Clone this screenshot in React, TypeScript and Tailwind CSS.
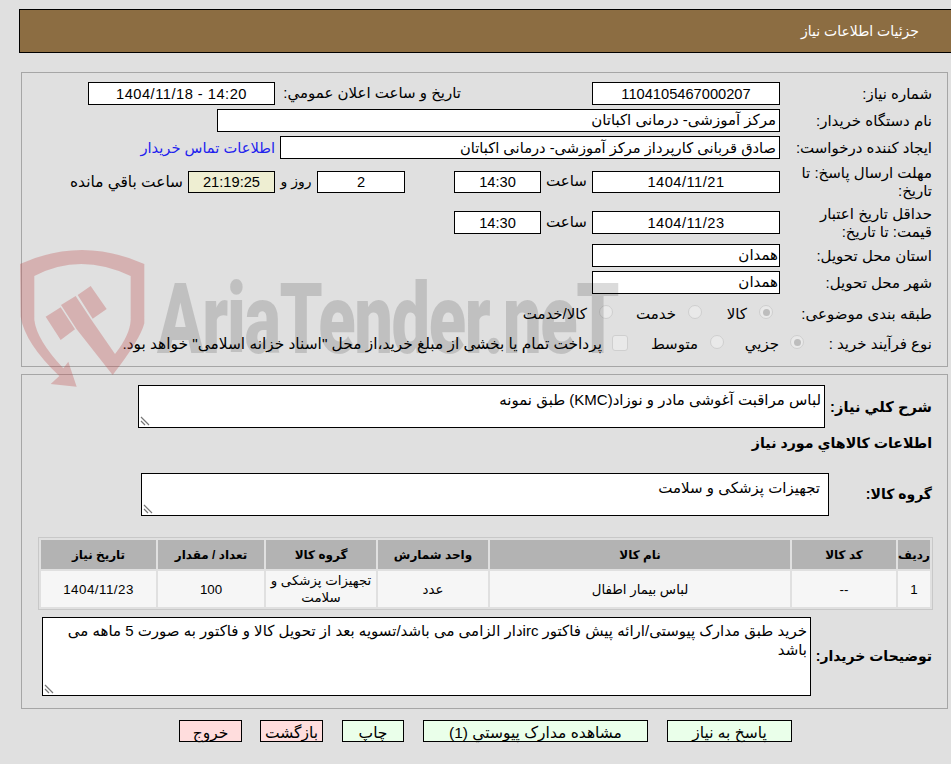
const field = 'h-[23px] border border-black flex items-center shrink-0';
const digits = 'text-[14.67px] justify-center';

function Row({ label, children, className = '' }: { label: React.ReactNode; children: React.ReactNode; className?: string }) {
  return (
    <div className={`flex items-center ${className}`}>
      <div className="w-[167px] pr-[15px] pl-[8px] shrink-0 leading-[18px]">{label}</div>
      {children}
    </div>
  );
}

function Radio({ checked = false }: { checked?: boolean }) {
  return (
    <span className="w-[14px] h-[14px] mb-[4px] rounded-full border border-[#cfcfcf] bg-[#e9e9e9] flex items-center justify-center shrink-0">
      {checked && <span className="w-[7px] h-[7px] rounded-full bg-[#bdbdbd]" />}
    </span>
  );
}

function Grip() {
  return (
    <svg className="absolute left-[1px] bottom-[1px]" width="10" height="10" viewBox="0 0 10 10" stroke="#777" strokeWidth="1.2" fill="none">
      <path d="M1 1l8 8M1 5l4 4" />
    </svg>
  );
}

function Watermark() {
  return (
    <div className="absolute left-0 top-[240px] w-[640px] h-[150px] pointer-events-none z-10" dir="ltr">
      <svg className="absolute left-0 top-0" width="200" height="170" viewBox="0 0 600 510">
        <path
          fillRule="evenodd"
          fill="rgba(190,70,70,0.3)"
          d="M60 72Q245 -12 433 72L433 250Q420 300 338 405L230 268L183 195L227 168L273 238L345 342Q390 285 392 240L392 108Q240 36 103 108L103 240Q110 300 190 385L205 365L230 440L152 432L178 408Q75 310 62 230Z"
        />
        <path fill="rgba(190,70,70,0.3)" d="M137 230L182 202L225 268L182 300ZM233 165L272 138L320 207L278 236Z" />
      </svg>
      <span className="absolute left-[157px] top-[30px] text-[rgba(0,0,0,0.14)] font-black text-[98px] leading-[100px] tracking-[-2px] origin-left scale-x-[0.7] whitespace-nowrap [font-family:'Roboto',sans-serif]">
        AriaTender.neT
      </span>
    </div>
  );
}

const columns = [
  { title: 'ردیف', width: 'w-[32px]' },
  { title: 'کد کالا', width: 'w-[104px]' },
  { title: 'نام کالا', width: 'w-[300px]' },
  { title: 'واحد شمارش', width: 'w-[110px]' },
  { title: 'گروه کالا', width: 'w-[110px]' },
  { title: 'تعداد / مقدار', width: 'w-[106px]' },
  { title: 'تاریخ نیاز', width: 'w-[115px]' },
];

const values = ['1', '--', 'لباس بیمار اطفال', 'عدد', 'تجهیزات پزشکی و سلامت', '100', '1404/11/23'];

export default function App() {
  return (
    <div dir="rtl" className="relative w-[951px] h-[764px] bg-[#e0e0e0] text-black text-[15px] overflow-hidden [font-family:'Liberation_Sans','DejaVu_Sans',sans-serif]">
      <div className="pt-[9px] pl-[19px]">
        <div className="h-[44px] bg-[#8c6d42] border-y border-l border-black flex items-center pr-[32px] text-white text-[14px]">
          جزئیات اطلاعات نیاز
        </div>
      </div>

      <Watermark />

      <div className="mt-[19px] mr-[3px] w-[927px] h-[295px] border border-[#a6a6a6] pt-[9px]">
        <div className="flex flex-col gap-[4px]">
          <Row label="شماره نیاز:" className="h-[23px]">
            <div className={`${field} ${digits} w-[188px] bg-white`}>1104105467000207</div>
            <div className="w-[317px] pr-[131px] shrink-0 whitespace-nowrap">تاریخ و ساعت اعلان عمومي:</div>
            <div className={`${field} ${digits} tracking-[0.5px] w-[187px] bg-white`}>14:20 - 1404/11/18</div>
          </Row>
          <Row label="نام دستگاه خریدار:" className="h-[23px]">
            <div className={`${field} w-[563px] bg-white pr-[3px]`}>مرکز آموزشی- درمانی اکباتان</div>
          </Row>
          <Row label="ایجاد کننده درخواست:" className="h-[23px]">
            <div className={`${field} text-[14.67px] w-[500px] bg-white pr-[3px]`}>صادق قربانی کارپرداز مرکز آموزشی- درمانی اکباتان</div>
            <a className="text-[#2222ee] text-[14.67px] pr-[5px] whitespace-nowrap">اطلاعات تماس خریدار</a>
          </Row>
          <Row label="مهلت ارسال پاسخ: تا تاریخ:" className="h-[37px]">
            <div className={`${field} ${digits} tracking-[0.5px] !h-[22px] w-[188px] bg-white`}>1404/11/21</div>
            <div className="w-[51px] text-center shrink-0">ساعت</div>
            <div className={`${field} ${digits} !h-[22px] w-[87px] bg-white`}>14:30</div>
            <div className="w-[49px] shrink-0" />
            <div className={`${field} ${digits} !h-[22px] w-[88px] bg-white`}>2</div>
            <div className="w-[42px] text-center shrink-0 text-[14px]">روز و</div>
            <div className={`${field} ${digits} !h-[22px] w-[87px] bg-[#eeeed2]`}>21:19:25</div>
            <div className="pr-[5px] text-[15.4px] whitespace-nowrap">ساعت باقي مانده</div>
          </Row>
          <Row label="حداقل تاریخ اعتبار قیمت: تا تاریخ:" className="h-[37px]">
            <div className={`${field} ${digits} tracking-[0.5px] w-[188px] bg-white`}>1404/11/23</div>
            <div className="w-[51px] text-center shrink-0">ساعت</div>
            <div className={`${field} ${digits} w-[87px] bg-white`}>14:30</div>
          </Row>
          <Row label="استان محل تحویل:" className="h-[23px] -mt-[1px]">
            <div className={`${field} w-[188px] bg-white pr-[1px]`}>همدان</div>
          </Row>
          <Row label="شهر محل تحویل:" className="h-[23px]">
            <div className={`${field} w-[188px] bg-white pr-[1px]`}>همدان</div>
          </Row>
          <Row label="طبقه بندی موضوعی:" className="h-[32px]">
            <div className="flex items-center gap-[12px] w-[78px] pr-[7px] shrink-0"><Radio checked /><span>کالا</span></div>
            <div className="flex items-center gap-[12px] w-[89px] shrink-0"><Radio /><span>خدمت</span></div>
            <div className="flex items-center gap-[12px]"><Radio /><span>کالا/خدمت</span></div>
          </Row>
          <Row label="نوع فرآیند خرید :" className="h-[20px]">
            <div className="flex items-center gap-[11px] w-[80px] -mr-[24px] shrink-0"><Radio checked /><span>جزیي</span></div>
            <div className="flex items-center gap-[12px] w-[96px] shrink-0"><Radio /><span>متوسط</span></div>
            <span className="w-[16px] h-[16px] mb-[2px] rounded-[3px] border border-[#cfcfcf] bg-[#e9e9e9] shrink-0" />
            <span className="pr-[10px] text-[15.4px] whitespace-nowrap">پرداخت تمام یا بخشی از مبلغ خرید،از محل "اسناد خزانه اسلامی" خواهد بود.</span>
          </Row>
        </div>
      </div>

      <div className="mt-[7px] mr-[3px] w-[927px] h-[335px] border border-[#a6a6a6]">
        <div className="flex items-center pt-[10px]">
          <div className="w-[122px] pr-[15px] text-[14.67px] font-bold shrink-0 whitespace-nowrap">شرح کلي نیاز:</div>
          <div className="relative h-[43px] w-[687px] border border-black bg-white pr-[3px] pt-[4px] leading-[19px]">
            لباس مراقبت آغوشی مادر و نوزاد(KMC) طبق نمونه
            <Grip />
          </div>
        </div>
        <div className="pr-[15px] pt-[5px] text-[14.2px] font-bold leading-[20px]">اطلاعات کالاهاي مورد نیاز</div>
        <div className="flex items-center pt-[20px]">
          <div className="w-[118px] pr-[15px] text-[14px] font-bold shrink-0 whitespace-nowrap">گروه کالا:</div>
          <div className="relative h-[43px] w-[688px] border border-black bg-white pr-[8px] pt-[4px] leading-[19px]">
            تجهیزات پزشکی و سلامت
            <Grip />
          </div>
        </div>
        <div className="mr-[14px] mt-[21px] w-[895px] border border-[#c8c8c8] p-[2px]">
          <div className="flex gap-[2px] text-[12px] font-bold">
            {columns.map(c => (
              <div key={c.title} className={`${c.width} h-[29px] bg-[#b3b3b3] flex items-center justify-center shrink-0`}>{c.title}</div>
            ))}
          </div>
          <div className="flex gap-[2px] mt-[2px] text-[13.33px]">
            {values.map((v, i) => (
              <div key={i} className={`${columns[i].width} h-[36px] bg-[#f6f6f6] flex items-center justify-center text-center leading-[17px] shrink-0 ${i === 6 ? 'tracking-[0.5px]' : ''}`}>{v}</div>
            ))}
          </div>
        </div>
        <div className="flex items-center pt-[7px]">
          <div className="w-[136px] pr-[15px] text-[14px] font-bold shrink-0 whitespace-nowrap">توضیحات خریدار:</div>
          <div className="relative h-[79px] w-[769px] border border-black bg-white pr-[3px] pl-[18px] pt-[3px] leading-[19px]">
            خرید طبق مدارک پیوستی/ارائه پیش فاکتور ircدار الزامی می باشد/تسویه بعد از تحویل کالا و فاکتور به صورت 5 ماهه می باشد
            <Grip />
          </div>
        </div>
      </div>

      <div className="flex pt-[11px] pr-[159px] text-[15.5px]">
        <button className="h-[22px] w-[125px] border border-black bg-[#eaffea]">پاسخ به نیاز</button>
        <button className="h-[22px] w-[225px] mr-[19px] border border-black bg-[#eaffea]">مشاهده مدارک پیوستي (1)</button>
        <button className="h-[22px] w-[62px] mr-[19px] border border-black bg-[#eaffea]">چاپ</button>
        <button className="h-[22px] w-[63px] mr-[19px] border border-black bg-[#ffdddd]">بازگشت</button>
        <button className="h-[22px] w-[63px] mr-[18px] border border-black bg-[#ffdddd]">خروج</button>
      </div>
    </div>
  );
}
